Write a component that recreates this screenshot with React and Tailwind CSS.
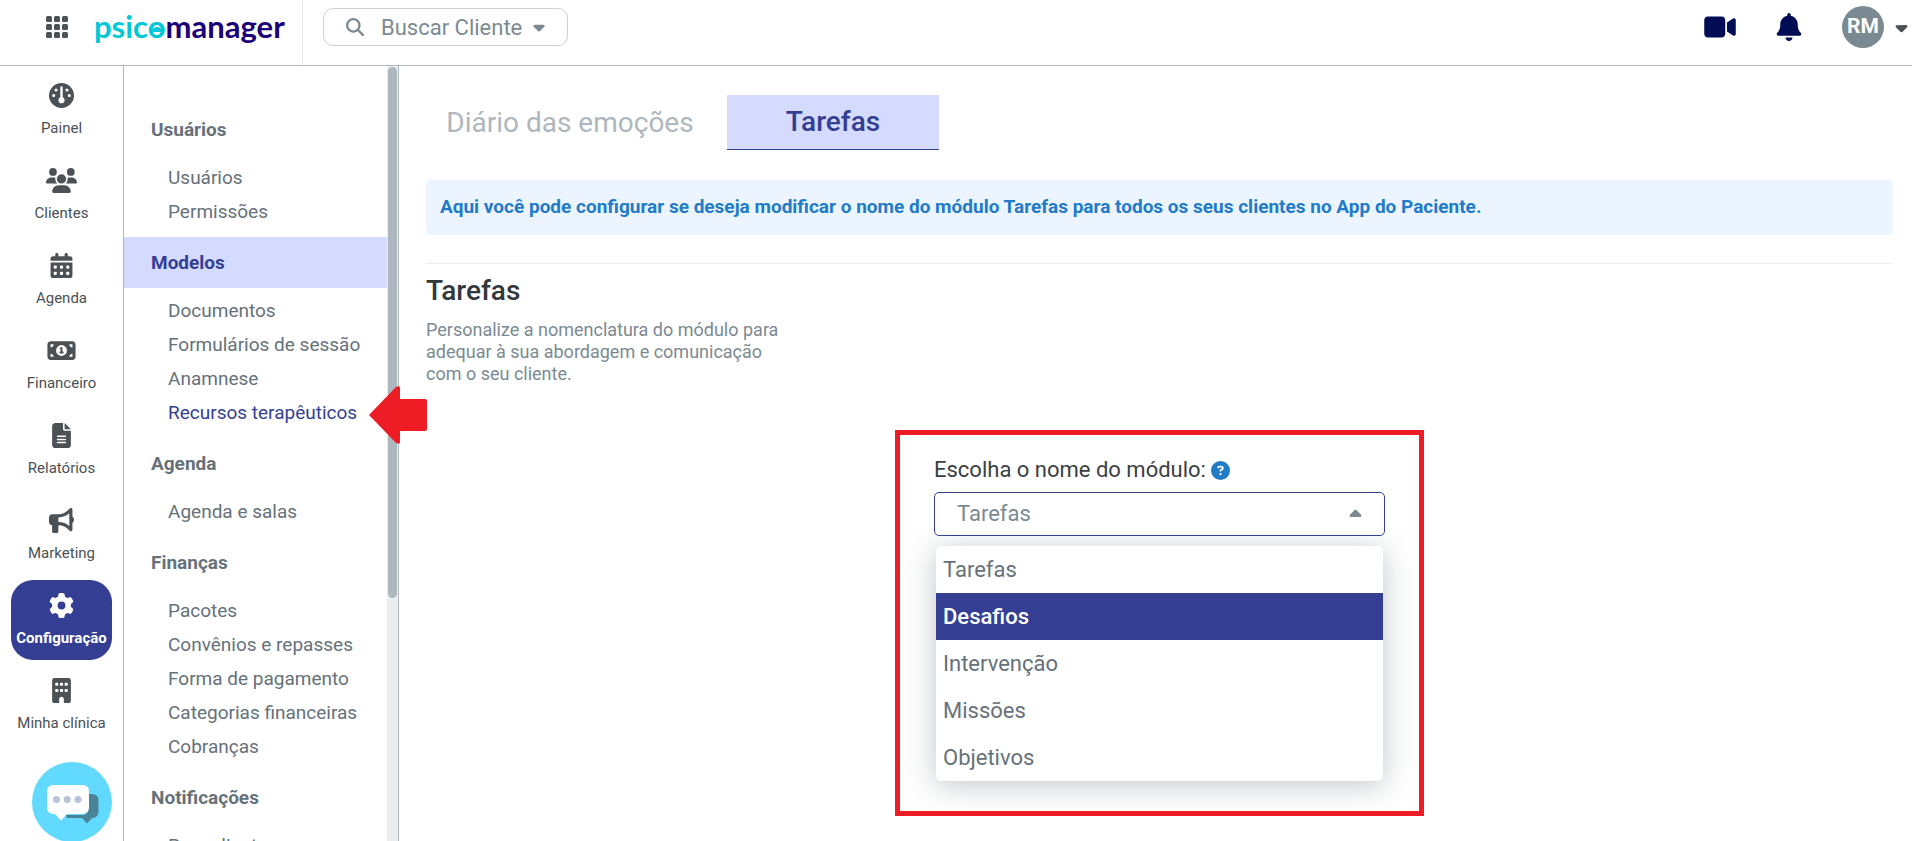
import React, { useState } from "react";
import {
  FaGauge,
  FaUsers,
  FaCalendarDays,
  FaMoneyBill1,
  FaFileLines,
  FaBullhorn,
  FaGear,
  FaBuilding,
  FaVideo,
  FaBell,
  FaMagnifyingGlass,
  FaCaretDown,
  FaCaretUp,
  FaCircleQuestion,
} from "react-icons/fa6";

const navItems = [
  { label: "Painel", Icon: FaGauge },
  { label: "Clientes", Icon: FaUsers },
  { label: "Agenda", Icon: FaCalendarDays },
  { label: "Financeiro", Icon: FaMoneyBill1 },
  { label: "Relatórios", Icon: FaFileLines },
  { label: "Marketing", Icon: FaBullhorn },
  { label: "Configuração", Icon: FaGear, active: true },
  { label: "Minha clínica", Icon: FaBuilding },
];

const menuSections = [
  { title: "Usuários", items: ["Usuários", "Permissões"] },
  {
    title: "Modelos",
    active: true,
    items: ["Documentos", "Formulários de sessão", "Anamnese", "Recursos terapêuticos"],
  },
  { title: "Agenda", items: ["Agenda e salas"] },
  {
    title: "Finanças",
    items: ["Pacotes", "Convênios e repasses", "Forma de pagamento", "Categorias financeiras", "Cobranças"],
  },
  { title: "Notificações", items: ["Para clientes"] },
];

const moduleNames = ["Tarefas", "Desafios", "Intervenção", "Missões", "Objetivos"];

function Logo() {
  return (
    <span className="flex font-['Lato',sans-serif] text-[31px] leading-9 font-bold">
      <span className="relative text-[#00c8d7]">
        psico
        <svg viewBox="0 0 10 5" className="absolute right-1 bottom-3 h-[5px] w-2.5" aria-hidden="true">
          <path d="M1 5V3Q1 0 5 0T9 3V5z" fill="#00c8d7" />
        </svg>
      </span>
      <span className="text-[#1b0078]">manager</span>
    </span>
  );
}

function AppsGrid() {
  const cells = [0, 8, 16];
  return (
    <svg width="22" height="22" viewBox="0 0 22 22" fill="#4b5154" aria-hidden="true">
      {cells.map((y) => cells.map((x) => <rect key={`${x}-${y}`} x={x} y={y} width="6" height="6" rx="1.5" />))}
    </svg>
  );
}

function Header() {
  return (
    <header className="flex h-[66px] shrink-0 border-b border-[#adb7bd]">
      <div className="flex w-[303px] shrink-0 items-start border-r border-[#e4e7e9] pl-[46px] pt-2">
        <button type="button" aria-label="Aplicativos" className="mt-2 mr-[26px]">
          <AppsGrid />
        </button>
        <a href="#inicio">
          <Logo />
        </a>
      </div>
      <div className="flex grow items-start justify-between pl-5 pt-2">
        <button
          type="button"
          className="flex h-[38px] w-[245px] items-center rounded-[10px] border border-[#ccd1d3] pl-[22px] text-[22px] text-[#7b8a92]"
        >
          <FaMagnifyingGlass className="mr-[17px] size-[18px]" />
          Buscar Cliente
          <FaCaretDown className="ml-2 size-[18px]" />
        </button>
        <div className="flex h-[38px] items-center">
          <button type="button" aria-label="Vídeo" className="mr-10 text-[#000d54]">
            <FaVideo className="h-7 w-8" />
          </button>
          <button type="button" aria-label="Avisos" className="mr-10 text-[#000d54]">
            <FaBell className="h-7 w-[26px]" />
          </button>
          <button type="button" className="flex items-center text-[#4b5154]">
            <span className="flex size-[42px] items-center justify-center rounded-full bg-[#7b8a92] text-[21px] font-bold text-white">
              RM
            </span>
            <FaCaretDown className="mr-px ml-2 size-[19px]" />
          </button>
        </div>
      </div>
    </header>
  );
}

function MainNav() {
  return (
    <nav className="w-[124px] shrink-0 border-r border-[#adb7bd] px-[11px] pt-1" aria-label="Principal">
      <ul className="flex flex-col gap-[5px]">
        {navItems.map(({ label, Icon, active }) => (
          <li key={label}>
            <a
              href="#nav"
              className={
                active
                  ? "flex h-20 flex-col items-center rounded-[22px] bg-[#343f93] pt-[13px] font-bold text-white"
                  : "flex h-20 flex-col items-center pt-[13px] text-[#4b5154]"
              }
            >
              <Icon className="h-[25px] w-[31px]" />
              <span className="mt-2.5 whitespace-nowrap text-[15px] leading-5">{label}</span>
            </a>
          </li>
        ))}
      </ul>
    </nav>
  );
}

function SettingsMenu() {
  return (
    <nav className="flex w-[275px] shrink-0 border-r border-[#adb7bd]" aria-label="Configuração">
      <div className="grow overflow-hidden pt-[38px]">
        {menuSections.map((section) => (
          <section key={section.title}>
            <h2
              className={
                section.active
                  ? "flex h-[51px] items-center bg-[#d5daff] pt-px pl-[27px] text-[19px] font-bold text-[#343f93]"
                  : "flex h-[51px] items-center pt-px pl-[27px] text-[19px] font-bold text-[#66717a]"
              }
            >
              {section.title}
            </h2>
            <ul className="pt-1.5 pb-2 pl-11">
              {section.items.map((item) => (
                <li key={item} className="h-[34px] whitespace-nowrap text-[19px] leading-[34px]">
                  <a
                    href="#menu"
                    className={item === "Recursos terapêuticos" ? "text-[#343f93]" : "text-[#66717a]"}
                  >
                    {item}
                  </a>
                </li>
              ))}
            </ul>
          </section>
        ))}
      </div>
      <div className="w-[11px] shrink-0 bg-[#eceeee] px-px pt-px">
        <div className="h-[531px] rounded-full bg-[#adb7bd]" />
      </div>
    </nav>
  );
}

function ModuleNameField() {
  const [value, setValue] = useState("Tarefas");
  return (
    <div className="mx-auto mt-[45px] w-[529px] border-[5px] border-[#ee1c25] px-[34px] pt-[22px] pb-[30px]">
      <div className="flex items-center gap-[5px]">
        <label htmlFor="module-name" className="text-[22px] leading-[26px] text-[#3c4043]">
          Escolha o nome do módulo:
        </label>
        <FaCircleQuestion className="size-[19px] text-[#217bc7]" />
      </div>
      <div className="mt-[9px] grid items-center">
        <select
          id="module-name"
          value={value}
          onChange={(event) => setValue(event.target.value)}
          className="col-start-1 row-start-1 h-11 w-full appearance-none rounded-[5px] border border-[#343f93] bg-white pr-12 pb-0.5 pl-[22px] text-[22px] text-[#7b8a92]"
        >
          {moduleNames.map((name) => (
            <option key={name}>{name}</option>
          ))}
        </select>
        <FaCaretUp className="pointer-events-none col-start-1 row-start-1 mr-5 size-[19px] justify-self-end text-[#7b8a92]" />
      </div>
      <ul
        role="listbox"
        aria-label="Nomes do módulo"
        className="mx-0.5 mt-2.5 overflow-hidden rounded-[5px] bg-white text-[22px] text-[#66717a] shadow-[0_4px_30px_rgba(75,85,95,0.35)]"
      >
        {moduleNames.map((name) => (
          <li
            key={name}
            role="option"
            aria-selected={name === "Desafios"}
            className={
              name === "Desafios"
                ? "flex h-[47px] items-center bg-[#343f93] pl-[7px] font-medium text-white"
                : "flex h-[47px] items-center pl-[7px]"
            }
          >
            {name}
          </li>
        ))}
      </ul>
    </div>
  );
}

function Content() {
  return (
    <main className="min-w-0 grow overflow-hidden pt-[29px] pr-[19px] pl-[27px]">
      <div className="flex text-[28px] leading-[54px]" role="tablist">
        <button type="button" role="tab" aria-selected="false" className="w-[288px] text-center text-[#adb7bd]">
          Diário das emoções
        </button>
        <button
          type="button"
          role="tab"
          aria-selected="true"
          className="ml-[13px] w-[212px] border-b border-[#343f93] bg-[#d5daff] font-medium text-[#343f93]"
        >
          Tarefas
        </button>
      </div>
      <p className="mt-[30px] flex h-[55px] items-center rounded-[5px] bg-[#ebf4ff] pl-3.5 text-[19px] font-bold text-[#217bc7]">
        Aqui você pode configurar se deseja modificar o nome do módulo Tarefas para todos os seus clientes no App do
        Paciente.
      </p>
      <hr className="mt-7 border-[#eceeef]" />
      <h1 className="mt-2.5 text-[28px] leading-[34px] font-medium text-[#33383b]">Tarefas</h1>
      <p className="mt-[11px] w-[366px] text-[18px] leading-[22px] text-[#7b8a92]">
        Personalize a nomenclatura do módulo para adequar à sua abordagem e comunicação com o seu cliente.
      </p>
      <ModuleNameField />
    </main>
  );
}

function ChatButton() {
  return (
    <button type="button" aria-label="Conversar" className="absolute -bottom-px left-8 size-20">
      <svg viewBox="0 0 80 80" className="size-20">
        <circle cx="40" cy="40" r="40" fill="#62d9ff" />
        <path
          d="M56 32h4q6.500 0 6.500 6.500v11q0 6.500-6.500 6.500l-5 5.500-5-5.500H36q-2 0-2-3h16q6 0 6-6z"
          fill="#488397"
        />
        <path
          d="M21.500 23h29q6.500 0 6.500 6.500v16q0 6.500-6.500 6.500H35l-6 6.500-6-6.500h-1.500Q15 52 15 45.500v-16Q15 23 21.500 23z"
          fill="#fff"
        />
        <g fill="#b7c3d9">
          <circle cx="24.500" cy="37.500" r="3.500" />
          <circle cx="35.200" cy="37.500" r="3.500" />
          <circle cx="46" cy="37.500" r="3.500" />
        </g>
      </svg>
    </button>
  );
}

function PointerArrow() {
  return (
    <svg viewBox="0 0 58 58" className="absolute top-[386px] left-[369px] size-[58px]" aria-hidden="true">
      <path d="M0 29 27 1Q31-1 31 2V13H56Q58 13 58 15V43Q58 45 56 45H31V56Q31 59 27 57z" fill="#ee1c25" />
    </svg>
  );
}

export default function App() {
  return (
    <div className="relative flex h-screen flex-col overflow-hidden bg-white font-['Roboto',sans-serif]">
      <Header />
      <div className="flex min-h-0 grow">
        <MainNav />
        <SettingsMenu />
        <Content />
      </div>
      <PointerArrow />
      <ChatButton />
    </div>
  );
}
